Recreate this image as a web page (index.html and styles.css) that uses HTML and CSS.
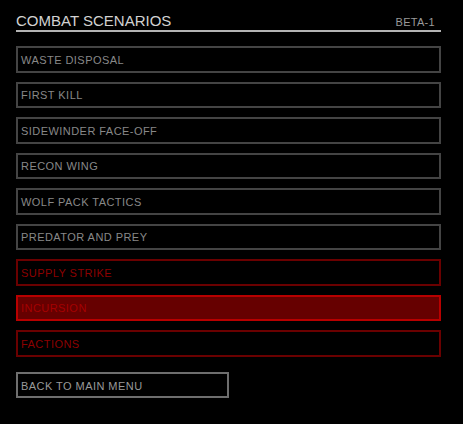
FILE: index.html
```html
<!DOCTYPE html>
<html>
<head>
<meta charset="utf-8">
<link rel="stylesheet" href="styles.css">
</head>
<body>
<div class="panel">
  <div class="header">
    <span class="title">COMBAT SCENARIOS</span>
    <span class="version">BETA-1</span>
  </div>
  <ul class="list">
    <li class="item">WASTE DISPOSAL</li>
    <li class="item">FIRST KILL</li>
    <li class="item">SIDEWINDER FACE-OFF</li>
    <li class="item">RECON WING</li>
    <li class="item">WOLF PACK TACTICS</li>
    <li class="item">PREDATOR AND PREY</li>
    <li class="item locked">SUPPLY STRIKE</li>
    <li class="item locked selected">INCURSION</li>
    <li class="item locked">FACTIONS</li>
  </ul>
  <div class="back">BACK TO MAIN MENU</div>
</div>
</body>
</html>
```
FILE: styles.css
```css
html, body {
  margin: 0;
  padding: 0;
  background: #000;
}
body {
  font-family: "Liberation Sans", Arial, sans-serif;
  width: 463px;
  height: 424px;
  overflow: hidden;
}
.panel {
  width: 425px;
  margin-left: 16px;
  padding-top: 12px;
}
.header {
  display: flex;
  justify-content: space-between;
  align-items: baseline;
  border-bottom: 2px solid #b4b4b4;
  height: 18px;
}
.title {
  font-size: 15px;
  line-height: 18px;
  color: #d2d2d2;
}
.version {
  font-size: 11px;
  letter-spacing: 0.3px;
  color: #9a9a9a;
  padding-right: 6px;
}
.list {
  list-style: none;
  margin: 14px 0 0 0;
  padding: 0;
  display: flex;
  flex-direction: column;
  gap: 9px;
}
.item {
  box-sizing: border-box;
  height: 26.5px;
  border: 2px solid #444;
  padding: 1px 0 0 3px;
  display: flex;
  align-items: center;
  font-size: 11px;
  letter-spacing: 0.45px;
  color: #888;
}
.item.locked {
  border-color: #6a0000;
  color: #8c0000;
}
.item.selected {
  background: #660000;
  border-color: #b80000;
  color: #a50000;
}
.back {
  box-sizing: border-box;
  margin-top: 15.5px;
  width: 213px;
  height: 26px;
  border: 2px solid #6e6e6e;
  padding: 1px 0 0 3px;
  display: flex;
  align-items: center;
  font-size: 11px;
  letter-spacing: 0.45px;
  color: #999;
}
```
